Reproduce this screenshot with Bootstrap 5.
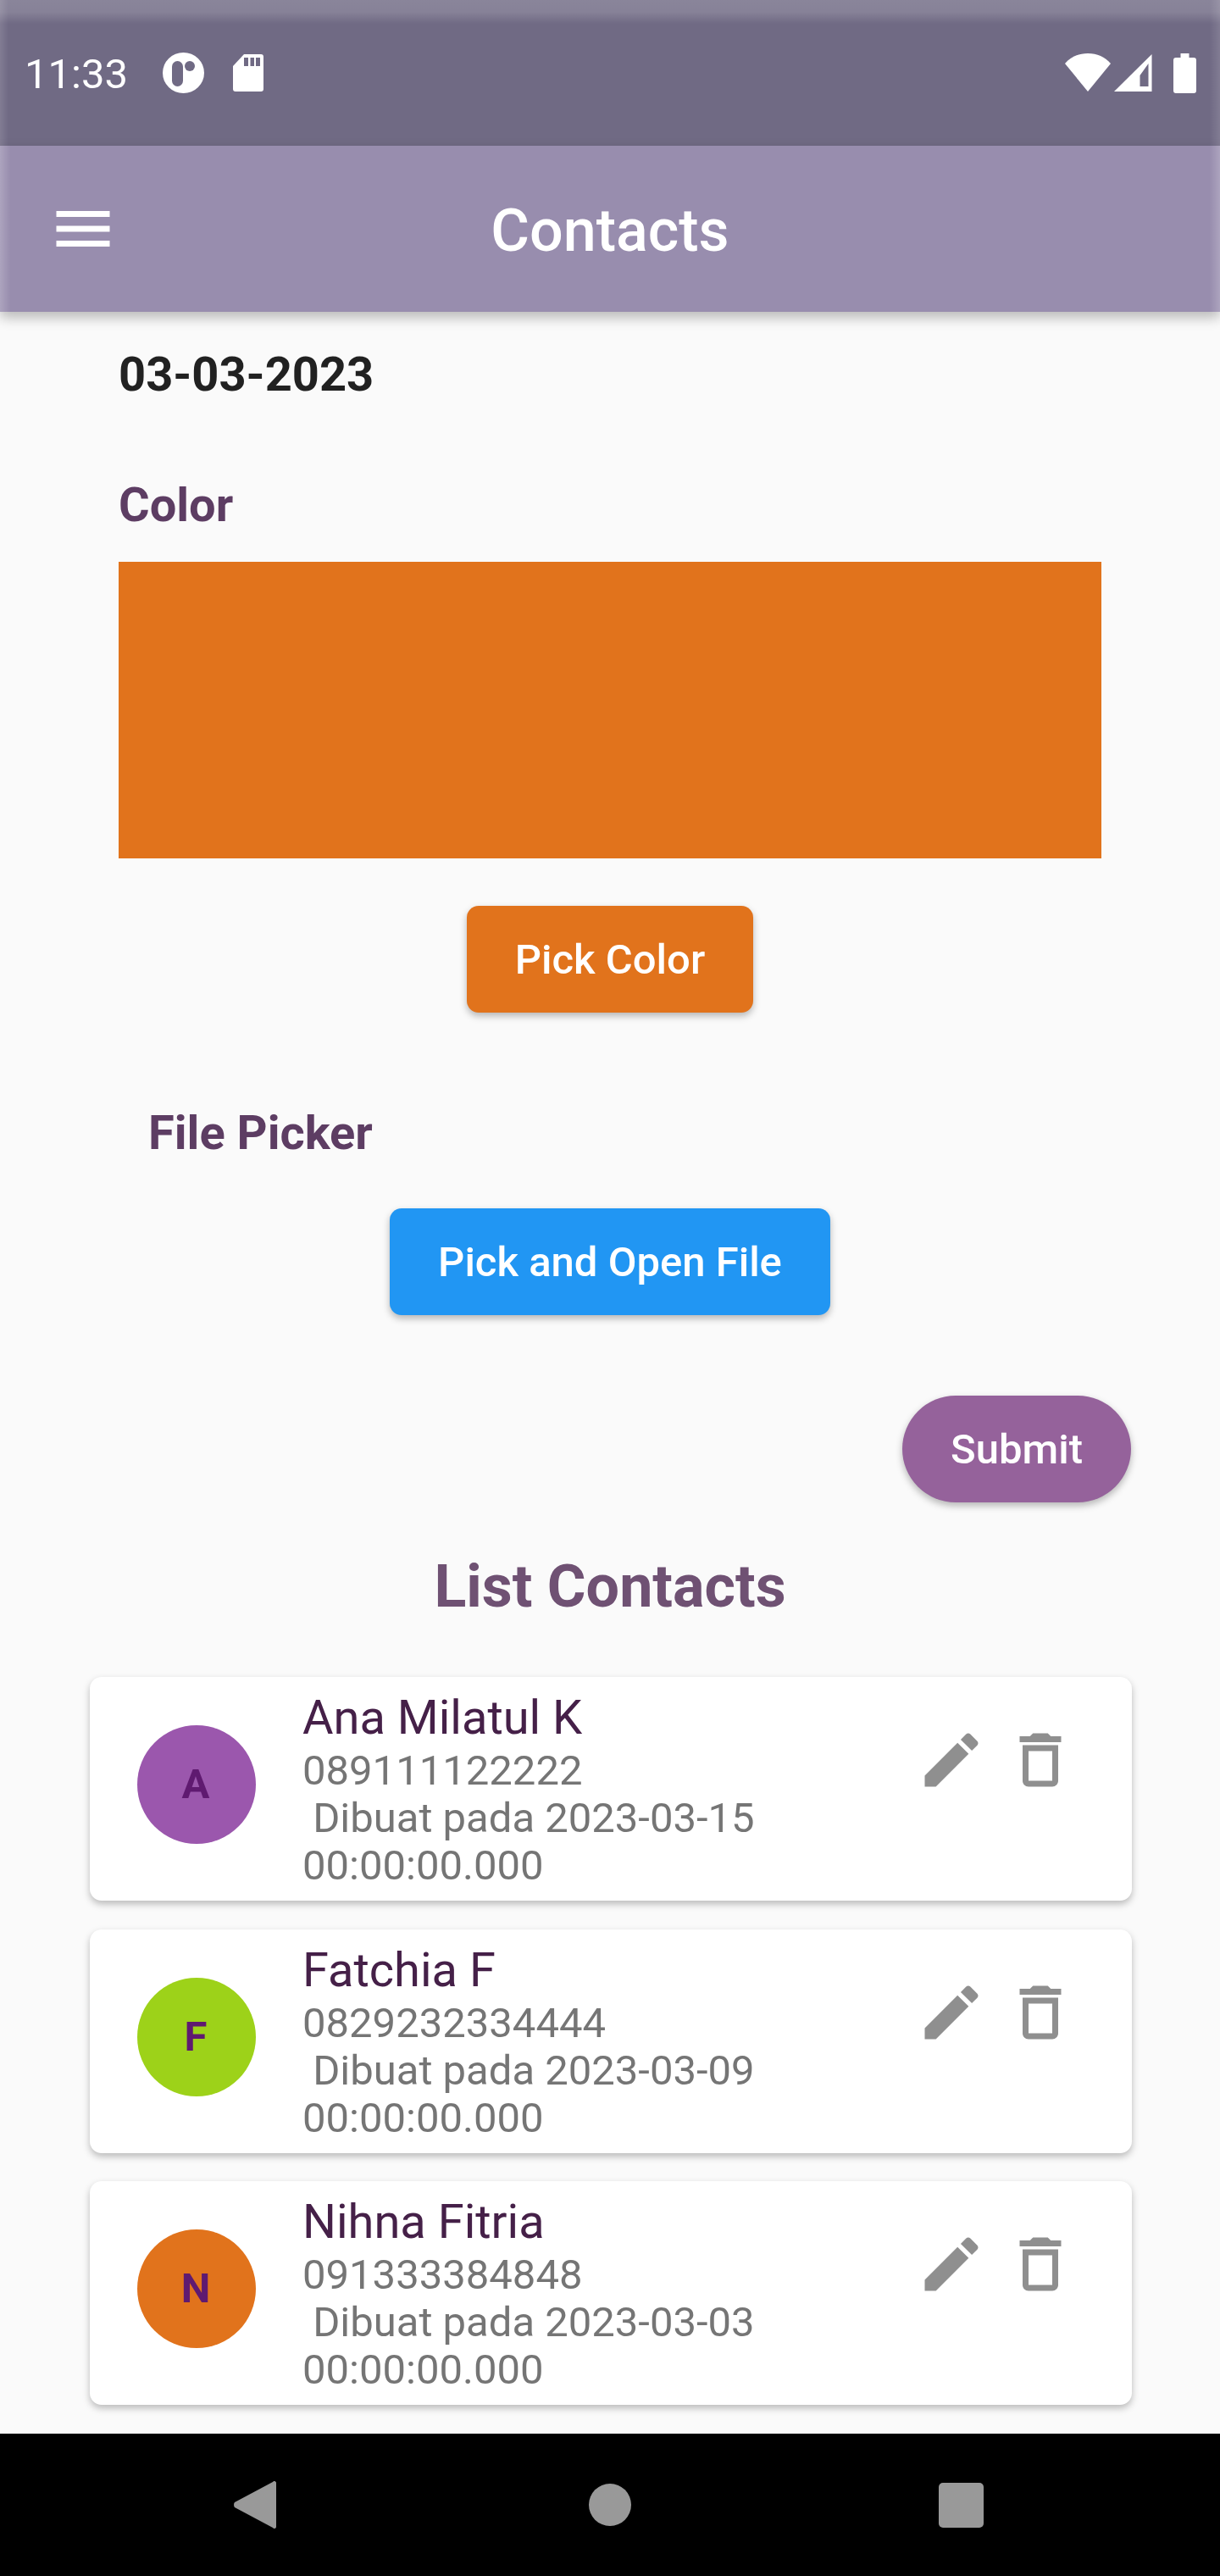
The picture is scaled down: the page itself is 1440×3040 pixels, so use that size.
<!DOCTYPE html>
<html lang="en">
<head>
    <meta charset="UTF-8">
    <meta name="viewport" content="width=device-width, initial-scale=1.0">
    <title>Contacts</title>
    <link href="https://cdn.jsdelivr.net/npm/bootstrap@5.3.0/dist/css/bootstrap.min.css" rel="stylesheet">
    <style>
        body {
            background-color: #fafafa;
            font-family: Roboto, "Liberation Sans", sans-serif;
            overflow: hidden;
        }

        .screen {
            width: 1440px;
            height: 3040px;
        }

        /* Android status bar */
        .status-strip {
            height: 172px;
            flex: none;
            padding: 62px 28px 0 29px;
            color: #fff;
            background:
                linear-gradient(180deg, rgba(255,255,255,.18) 0, rgba(255,255,255,.16) 14px, rgba(255,255,255,0) 28px),
                linear-gradient(90deg, rgba(255,255,255,.12) 0, rgba(255,255,255,0) 10px, rgba(255,255,255,0) 1428px, rgba(255,255,255,.12) 1440px),
                #706a84;
        }

        .status-time {
            font-size: 49px;
            line-height: 48px;
            width: 163px;
            margin-top: 2px;
        }

        .status-icon {
            height: 48px;
            fill: #fff;
        }

        .status-icon .cut {
            fill: #706a84;
        }

        .icon-sd { margin-left: 33px; }
        .icon-signal { margin-left: 4px; }
        .icon-battery { margin-left: 25px; }

        /* App bar */
        .app-bar {
            height: 196px;
            flex: none;
            padding: 0;
            position: relative;
            z-index: 2;
            background:
                linear-gradient(90deg, rgba(255,255,255,.2) 0, rgba(255,255,255,0) 12px, rgba(255,255,255,0) 1428px, rgba(255,255,255,.2) 1440px),
                #988dae;
            box-shadow: 0 7px 14px rgba(0, 0, 0, .26);
        }

        .menu-slot {
            width: 84px;
            height: 84px;
            margin: 0 56px;
            fill: #fff;
        }

        .app-title {
            font-size: 70px;
            font-weight: 500;
            color: #fff;
            line-height: 84px;
            margin-top: 3px;
        }

        /* Form area */
        .page-body {
            padding-top: 41px;
            overflow: hidden;
        }

        .date-line {
            font-size: 56px;
            font-weight: 700;
            line-height: 66px;
            color: #212121;
            margin: 0 0 0 140px;
        }

        .field-label {
            font-size: 56px;
            font-weight: 700;
            line-height: 66px;
            color: #5d3d63;
            margin: 0;
        }

        .label-color {
            margin: 88px 0 0 140px;
        }

        .color-box {
            width: 1160px;
            height: 350px;
            margin: 34px 0 0 140px;
            background-color: #e1731c;
        }

        .label-file {
            margin: 109px 0 0 175px;
        }

        .raised-btn {
            height: 126px;
            border: 0;
            border-radius: 14px;
            padding: 0 57px;
            color: #fff;
            font-size: 49px;
            font-weight: 500;
            line-height: 1;
            box-shadow: 0 4px 8px rgba(0, 0, 0, .28);
        }

        .raised-btn:hover {
            color: #fff;
        }

        .btn-orange {
            background-color: #e1731c;
            margin-top: 56px;
        }

        .btn-orange:hover {
            background-color: #e1731c;
        }

        .btn-blue {
            background-color: #2196f3;
            margin-top: 56px;
        }

        .btn-blue:hover {
            background-color: #2196f3;
        }

        .submit-row {
            margin-top: 95px;
            padding-right: 105px;
        }

        .btn-submit {
            background-color: #95629b;
            border-radius: 63px;
        }

        .btn-submit:hover {
            background-color: #95629b;
        }

        .list-title {
            font-size: 70px;
            font-weight: 700;
            line-height: 82px;
            color: #6f5173;
            margin: 58px 0 0 0;
            text-align: center;
        }

        /* Contact cards */
        .contact-list {
            margin: 66px 104px 0 106px;
            gap: 33.500px;
        }

        .contact-card {
            height: 264px;
            flex: none;
            border: 0;
            border-radius: 14px;
            box-shadow: 0 4px 8px rgba(0, 0, 0, .26);
        }

        .contact-avatar {
            width: 140px;
            height: 140px;
            margin: 57px 0 0 56px;
            padding-right: 2px;
            font-size: 49px;
            font-weight: 700;
            color: #5f1a70;
        }

        .avatar-purple { background-color: #9b57ad; }
        .avatar-green { background-color: #9dd219; }
        .avatar-orange { background-color: #e1731c; }

        .contact-text {
            width: 640px;
            margin-left: 55px;
            padding-top: 15px;
        }

        .contact-name {
            font-size: 56px;
            line-height: 66px;
            color: #452048;
        }

        .contact-meta {
            font-size: 49px;
            line-height: 56px;
            margin-top: 2px;
            color: #757575;
            white-space: pre-wrap;
        }

        .action-icon {
            width: 84px;
            height: 84px;
            fill: #8f8f8f;
            margin-top: 56px;
        }

        .icon-edit {
            margin-left: 84px;
        }

        .icon-trash {
            margin-left: 21px;
        }

        /* Android nav bar */
        .nav-strip {
            height: 168px;
            flex: none;
            padding: 0 279px 0 276px;
            background-color: #000;
        }

        .nav-strip svg {
            fill: #999;
        }

        .nav-home {
            margin: 0 363px 0 369px;
        }
    </style>
</head>
<body>

    <div class="screen d-flex flex-column">

        <!-- Status bar -->
        <div class="status-strip d-flex align-items-start">
            <span class="status-time">11:33</span>
            <svg class="status-icon" width="50" viewBox="0 0 50 48"><ellipse cx="24.500" cy="24" rx="24.500" ry="24"/><rect class="cut" x="11" y="10" width="13" height="30" rx="6.500"/><circle class="cut" cx="32" cy="16" r="6"/></svg>
            <svg class="status-icon icon-sd" width="36" viewBox="0 0 36 48"><path d="M13 2h20a3 3 0 0 1 3 3v38a3 3 0 0 1-3 3H3a3 3 0 0 1-3-3V16z"/><path class="cut" d="M13 6h5v10h-5zM20.500 6h4.500v10h-4.500zM27 6h5v10h-5z"/></svg>
            <span class="flex-grow-1"></span>
            <svg class="status-icon" width="54" viewBox="0 0 54 48"><path d="M0 13C7 5 16 1 27 1s20 4 27 12L27 46z"/></svg>
            <svg class="status-icon icon-signal" width="45" viewBox="0 0 45 48"><path d="M44.500 2v44H0z"/><path class="cut" d="M30.500 27l10-14v27h-10z"/></svg>
            <svg class="status-icon icon-battery" width="27" viewBox="0 0 27 48"><path d="M8.500 1h10v5h5.500a3 3 0 0 1 3 3v36a3 3 0 0 1-3 3H3a3 3 0 0 1-3-3V9a3 3 0 0 1 3-3h5.500z"/></svg>
        </div>

        <!-- App bar -->
        <nav class="navbar app-bar flex-nowrap">
            <svg class="menu-slot" viewBox="0 0 24 24"><path d="M3 18h18v-2H3v2zm0-5h18v-2H3v2zm0-7v2h18V6H3z"/></svg>
            <span class="app-title">Contacts</span>
            <span class="menu-slot"></span>
        </nav>

        <main class="page-body flex-grow-1">
            <p class="date-line">03-03-2023</p>

            <p class="field-label label-color">Color</p>
            <div class="color-box"></div>
            <div class="d-flex justify-content-center">
                <button type="button" class="btn raised-btn btn-orange">Pick Color</button>
            </div>

            <p class="field-label label-file">File Picker</p>
            <div class="d-flex justify-content-center">
                <button type="button" class="btn raised-btn btn-blue">Pick and Open File</button>
            </div>

            <div class="submit-row d-flex justify-content-end">
                <button type="button" class="btn raised-btn btn-submit">Submit</button>
            </div>

            <h2 class="list-title">List Contacts</h2>

            <div class="contact-list d-flex flex-column">
                <div class="card contact-card flex-row align-items-start">
                    <div class="contact-avatar avatar-purple rounded-circle d-flex align-items-center justify-content-center">A</div>
                    <div class="contact-text">
                        <div class="contact-name">Ana Milatul K</div>
                        <div class="contact-meta">089111122222
 Dibuat pada 2023-03-15 00:00:00.000</div>
                    </div>
                    <svg class="action-icon icon-edit" viewBox="0 0 24 24"><path d="M3 17.25V21h3.75L17.81 9.94l-3.75-3.75L3 17.25zM20.71 7.04c.39-.39.39-1.02 0-1.41l-2.34-2.34c-.39-.39-1.02-.39-1.41 0l-1.83 1.83 3.75 3.75 1.83-1.83z"/></svg>
                    <svg class="action-icon icon-trash" viewBox="0 0 24 24"><path d="M6 19c0 1.100.9 2 2 2h8c1.100 0 2-.9 2-2V7H6v12zM8 9h8v10H8V9zm7.500-5l-1-1h-5l-1 1H5v2h14V4h-3.500z"/></svg>
                </div>

                <div class="card contact-card flex-row align-items-start">
                    <div class="contact-avatar avatar-green rounded-circle d-flex align-items-center justify-content-center">F</div>
                    <div class="contact-text">
                        <div class="contact-name">Fatchia F</div>
                        <div class="contact-meta">0829232334444
 Dibuat pada 2023-03-09 00:00:00.000</div>
                    </div>
                    <svg class="action-icon icon-edit" viewBox="0 0 24 24"><path d="M3 17.25V21h3.75L17.81 9.94l-3.75-3.75L3 17.25zM20.71 7.04c.39-.39.39-1.02 0-1.41l-2.34-2.34c-.39-.39-1.02-.39-1.41 0l-1.83 1.83 3.75 3.75 1.83-1.83z"/></svg>
                    <svg class="action-icon icon-trash" viewBox="0 0 24 24"><path d="M6 19c0 1.100.9 2 2 2h8c1.100 0 2-.9 2-2V7H6v12zM8 9h8v10H8V9zm7.500-5l-1-1h-5l-1 1H5v2h14V4h-3.500z"/></svg>
                </div>

                <div class="card contact-card flex-row align-items-start">
                    <div class="contact-avatar avatar-orange rounded-circle d-flex align-items-center justify-content-center">N</div>
                    <div class="contact-text">
                        <div class="contact-name">Nihna Fitria</div>
                        <div class="contact-meta">091333384848
 Dibuat pada 2023-03-03 00:00:00.000</div>
                    </div>
                    <svg class="action-icon icon-edit" viewBox="0 0 24 24"><path d="M3 17.25V21h3.75L17.81 9.94l-3.75-3.75L3 17.25zM20.71 7.04c.39-.39.39-1.02 0-1.41l-2.34-2.34c-.39-.39-1.02-.39-1.41 0l-1.83 1.83 3.75 3.75 1.83-1.83z"/></svg>
                    <svg class="action-icon icon-trash" viewBox="0 0 24 24"><path d="M6 19c0 1.100.9 2 2 2h8c1.100 0 2-.9 2-2V7H6v12zM8 9h8v10H8V9zm7.500-5l-1-1h-5l-1 1H5v2h14V4h-3.500z"/></svg>
                </div>
            </div>
        </main>

        <!-- Android nav bar -->
        <div class="nav-strip d-flex align-items-center">
            <svg width="50" height="56" viewBox="0 0 50 56"><path d="M48 0c1 0 2 1 2 2v52c0 1-1 2-2 2-1 0-1.500-.5-2-1L1 31c-1.300-1.500-1.300-4.500 0-6L46 1c.5-.5 1-1 2-1z"/></svg>
            <svg class="nav-home" width="50" height="50" viewBox="0 0 50 50"><circle cx="25" cy="25" r="25"/></svg>
            <svg width="53" height="53" viewBox="0 0 53 53"><rect width="53" height="53" rx="5"/></svg>
        </div>
    </div>

    <script src="https://cdn.jsdelivr.net/npm/bootstrap@5.3.0/dist/js/bootstrap.bundle.min.js"></script>
</body>
</html>
